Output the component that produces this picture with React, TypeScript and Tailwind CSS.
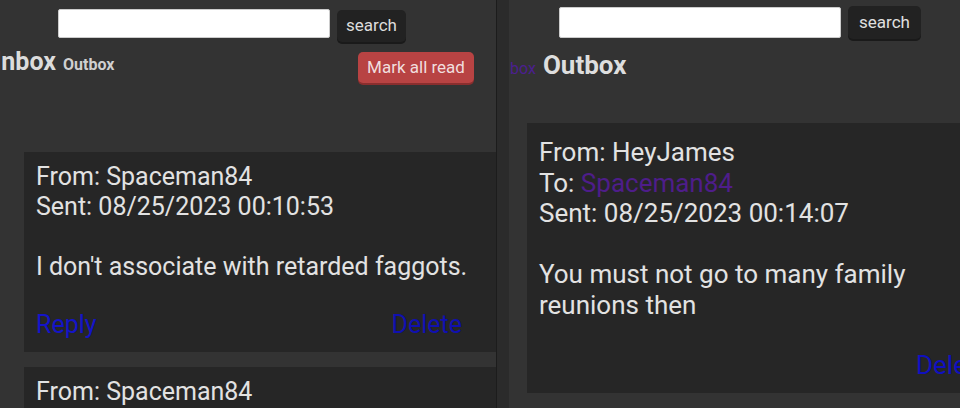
import React from "react";

const font = { fontFamily: "Roboto, 'Noto Sans', sans-serif" };

export default function App() {
  return (
    <div className="w-[960px] h-[408px] overflow-hidden flex bg-[#333333] text-[#e2e2e2]" style={font}>
      {/* Left panel */}
      <div className="w-[497px] shrink-0 h-full overflow-hidden bg-[#333333] border-r border-[#1c1c1c]">
        <div className="flex items-start pl-[58px] pt-[9px] gap-[7px] h-[42px]">
          <div className="w-[272px] h-[29px] bg-white rounded-[2px] border border-[#cccccc]" />
          <button className="mt-[1px] h-[32px] w-[69px] bg-[#222222] rounded-[5px] text-[17px] text-[#dddddd] shadow-[0_2px_0_#1a1a1a]">
            search
          </button>
        </div>
        <div className="flex items-start mt-[10px] pr-[22px] h-[31px]">
          <div className="flex items-baseline ml-[-6px] gap-[7px] mt-[-5px]">
            <span className="text-[25px] font-bold text-[#dcdcdc] leading-[30px]">Inbox</span>
            <span className="text-[16px] font-bold text-[#d0d0d0]">Outbox</span>
          </div>
          <button className="ml-auto h-[31px] w-[116px] bg-[#b84343] rounded-[5px] text-[17px] text-[#f0dede] shadow-[0_2px_0_#8a2e2e]">
            Mark all read
          </button>
        </div>
        <div className="ml-[24px] mt-[69px] w-[485px] bg-[#262626] pl-[12px] pr-[47px] pt-[10px] pb-[12px] text-[25px] leading-[30px]">
          <div>From: Spaceman84</div>
          <div>Sent: 08/25/2023 00:10:53</div>
          <div className="h-[30px]" />
          <div className="whitespace-nowrap">I don't associate with retarded faggots.</div>
          <div className="flex justify-between mt-[28px]">
            <span className="text-[#1414c8]">Reply</span>
            <span className="text-[#1010b0]">Delete</span>
          </div>
        </div>
        <div className="ml-[24px] mt-[15px] w-[485px] bg-[#262626] pl-[12px] pt-[10px] pb-[12px] text-[25px] leading-[30px]">
          <div>From: Spaceman84</div>
          <div>Sent: 08/25/2023 00:10:53</div>
        </div>
      </div>
      {/* Divider strip */}
      <div className="w-[12px] shrink-0 h-full bg-[#2b2b2b]" />
      {/* Right panel */}
      <div className="flex-1 h-full overflow-hidden bg-[#333333]">
        <div className="flex items-start pl-[50px] pt-[6px] gap-[7px] h-[39px]">
          <div className="mt-[1px] w-[282px] h-[31px] bg-white rounded-[2px] border border-[#cccccc]" />
          <button className="h-[33px] w-[73px] bg-[#222222] rounded-[5px] text-[17px] text-[#e0e0e0] shadow-[0_2px_0_#1a1a1a]">
            search
          </button>
        </div>
        <div className="flex items-baseline mt-[11px] gap-[7px] h-[30px]">
          <span className="text-[16px] text-[#4b1f8f] ml-[1px]">box</span>
          <span className="text-[26px] font-bold text-[#dedede] leading-[30px]">Outbox</span>
        </div>
        <div className="ml-[18px] mt-[43px] w-[470px] h-[270px] bg-[#262626] pl-[12px] pt-[14px] text-[26px] leading-[30.5px]">
          <div>From: HeyJames</div>
          <div>
            To: <span className="text-[#4e1d8a]">Spaceman84</span>
          </div>
          <div>Sent: 08/25/2023 00:14:07</div>
          <div className="h-[30.5px]" />
          <div className="w-[390px]">You must not go to many family reunions then</div>
          <div className="mt-[30px] pl-[377px] text-[#1010c0]">Delete</div>
        </div>
      </div>
    </div>
  );
}
